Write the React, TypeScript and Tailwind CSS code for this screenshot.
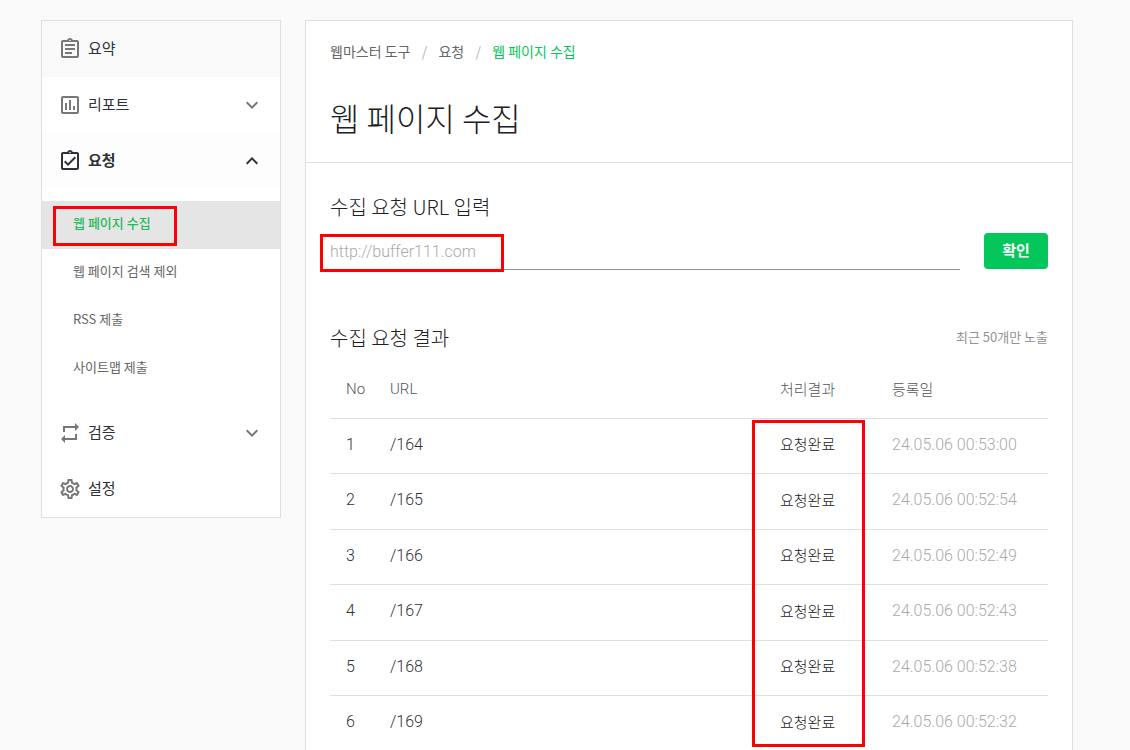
import React from "react";
import {
  MdExpandLess,
  MdExpandMore,
  MdOutlineAssessment,
  MdOutlineAssignment,
  MdOutlineAssignmentTurnedIn,
  MdOutlineSettings,
  MdRepeat,
} from "react-icons/md";

type MenuButtonProps = {
  icon: React.ReactNode;
  label: string;
  expanded?: boolean;
  className?: string;
};

function MenuButton({ icon, label, expanded, className = "" }: MenuButtonProps) {
  return (
    <button
      type="button"
      aria-expanded={expanded}
      className={`flex h-14 w-full items-center px-4 text-left text-[15px] leading-6 ${className}`}
    >
      <span className={`size-6 text-2xl ${expanded ? "text-[#303038]" : "text-[#777777]"}`}>{icon}</span>
      <span className="ml-1.5 flex-1 pb-0.5">{label}</span>
      {expanded !== undefined && (
        <span className={`text-2xl ${expanded ? "text-[#303038]" : "text-[#777777]"}`}>
          {expanded ? <MdExpandLess /> : <MdExpandMore />}
        </span>
      )}
    </button>
  );
}

const subItems = ["웹 페이지 수집", "웹 페이지 검색 제외", "RSS 제출", "사이트맵 제출"];

function Sidebar() {
  return (
    <nav className="w-60 shrink-0 border border-[#dfdfdf] bg-white text-[#303038]">
      <MenuButton icon={<MdOutlineAssignment />} label="요약" className="bg-[#f9f9f9]" />
      <MenuButton icon={<MdOutlineAssessment />} label="리포트" expanded={false} />
      <MenuButton
        icon={<MdOutlineAssignmentTurnedIn />}
        label="요청"
        expanded
        className="bg-[#fdfdfd] font-bold"
      />
      <ul className="py-3">
        {subItems.map((item, i) => (
          <li key={item} className="relative">
            <a
              href="#"
              className={`flex h-12 items-center pb-1 pl-[31px] text-[13px] ${
                i === 0 ? "bg-[#e5e5e5] font-medium text-[#1dbb5c]" : "text-[#666666]"
              }`}
            >
              {item}
            </a>
            {i === 0 && (
              <span className="pointer-events-none absolute top-[5px] left-[11px] h-10 w-[124px] border-3 border-[#fe0000]" />
            )}
          </li>
        ))}
      </ul>
      <MenuButton icon={<MdRepeat />} label="검증" expanded={false} />
      <MenuButton icon={<MdOutlineSettings />} label="설정" />
    </nav>
  );
}

const rows = [
  { url: "/164", date: "24.05.06 00:53:00" },
  { url: "/165", date: "24.05.06 00:52:54" },
  { url: "/166", date: "24.05.06 00:52:49" },
  { url: "/167", date: "24.05.06 00:52:43" },
  { url: "/168", date: "24.05.06 00:52:38" },
  { url: "/169", date: "24.05.06 00:52:32" },
];

function ResultTable() {
  return (
    <div className="relative mt-2">
      <table className="w-full table-fixed border-collapse text-left text-[15px]">
        <colgroup>
          <col className="w-[60px]" />
          <col />
          <col className="w-28" />
          <col className="w-[156px]" />
        </colgroup>
        <thead>
          <tr className="h-[58px] border-b border-[#dfdfdf] text-[#555555]">
            <th className="pl-4 font-['Roboto',sans-serif] font-light">No</th>
            <th className="font-['Roboto',sans-serif] font-light">URL</th>
            <th className="font-light">처리결과</th>
            <th className="font-light">등록일</th>
          </tr>
        </thead>
        <tbody>
          {rows.map((row, i) => (
            <tr
              key={row.url}
              className="border-b border-[#dfdfdf] font-light text-[#303038] odd:h-[55px] even:h-14"
            >
              <td className="pb-0.5 pl-4 font-['Roboto',sans-serif] text-base">{i + 1}</td>
              <td className="pb-0.5 font-['Roboto',sans-serif] text-base">{row.url}</td>
              <td className="pb-0.5 text-[#202024]">요청완료</td>
              <td className="pb-0.5 font-['Roboto',sans-serif] text-base text-[#aaaaaa]">{row.date}</td>
            </tr>
          ))}
        </tbody>
      </table>
      <span className="pointer-events-none absolute top-[60px] right-[183px] h-[327px] w-[113px] border-3 border-[#fe0000]" />
    </div>
  );
}

export default function App() {
  return (
    <div className="flex min-h-screen items-start gap-6 bg-[#fafafa] pt-5 pr-[57px] pl-[41px] font-['Noto_Sans_CJK_KR',sans-serif]">
      <Sidebar />
      <main className="min-w-0 flex-1 border border-[#dfdfdf] bg-white">
        <header className="border-b border-[#dfdfdf] px-6 pt-5 pb-[21px]">
          <nav className="flex text-sm leading-5 text-[#666666]">
            <a href="#">웹마스터 도구</a>
            <span className="w-7 text-center text-[#b4b4b4]">/</span>
            <a href="#">요청</a>
            <span className="w-7 text-center text-[#b4b4b4]">/</span>
            <a href="#" className="text-[#03c75a]">
              웹 페이지 수집
            </a>
          </nav>
          <h1 className="mt-8 text-[32px] leading-[48px] font-light text-[#202024]">웹 페이지 수집</h1>
        </header>
        <section className="px-6 pt-[30px]">
          <label htmlFor="url" className="block text-xl leading-7 font-light text-[#202024]">
            수집 요청 URL 입력
          </label>
          <form className="mt-3 flex items-start gap-6" onSubmit={(e) => e.preventDefault()}>
            <div className="relative min-w-0 flex-1">
              <input
                id="url"
                type="text"
                placeholder="http://buffer111.com"
                className="h-[37px] w-full border-b border-[#929294] bg-transparent font-['Roboto',sans-serif] text-base font-light outline-none placeholder:text-[#aaaaaa]"
              />
              <span className="pointer-events-none absolute top-px left-[-10px] h-[38px] w-[184px] border-3 border-[#fe0000]" />
            </div>
            <button type="submit" className="h-9 w-16 rounded bg-[#03c75a] pb-0.5 text-[15px] font-bold text-white">
              확인
            </button>
          </form>
        </section>
        <section className="px-6 pt-[54px] pb-6">
          <div className="flex items-center justify-between">
            <h2 className="text-xl leading-7 font-light text-[#202024]">수집 요청 결과</h2>
            <p className="pb-0.5 text-[13px] text-[#929294]">최근 50개만 노출</p>
          </div>
          <ResultTable />
        </section>
      </main>
    </div>
  );
}
